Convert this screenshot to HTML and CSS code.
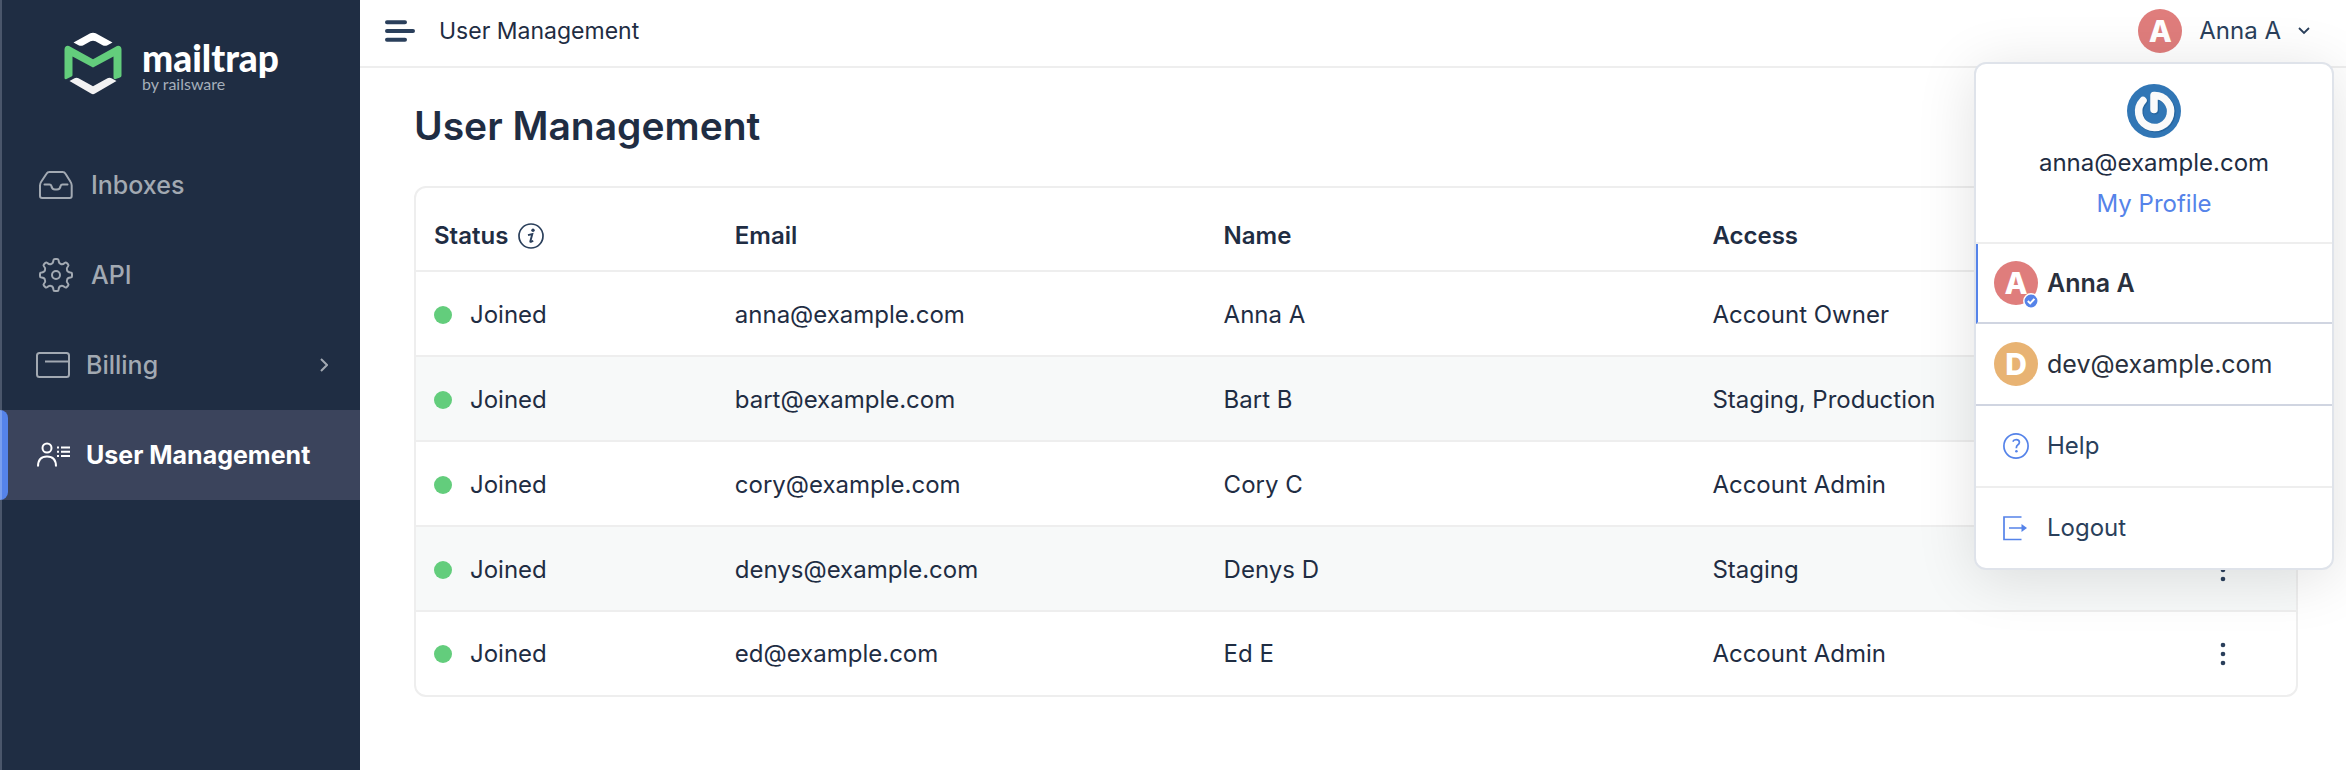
FILE: index.html
```html
<!DOCTYPE html>
<html lang="en">
<head>
<meta charset="utf-8">
<meta name="viewport" content="width=device-width, initial-scale=1">
<title>User Management</title>
<link rel="stylesheet" href="styles.css">
</head>
<body>
<div class="app">
  <aside class="sidebar">
    <a class="logo" href="#">
      <svg class="logo-mark" viewBox="0 0 58 64" width="58" height="64" aria-hidden="true">
        <path d="M9.5 10.5 26.3 1.3Q29 0 31.700 1.300L48.500 10.500 43.500 13.300Q41 14.400 38.600 13.300L31.500 9.300Q29 8 26.500 9.300L19.400 13.300Q17 14.400 14.500 13.300Z" fill="#fff"/>
        <path d="M0.500 17.500Q0.800 13.200 5 14L29 27.200 53 14Q57.200 13.200 57.500 17.500V43.500Q57.500 45 56 45.500L51 47.200Q49.500 47.200 49.500 45.500V24.500L29 35.500 8.500 24.500V43Q8.500 44 7.500 44.500L2 47.200Q0.500 47.200 0.500 46Z" fill="#63cd7c"/>
        <path d="M5.500 49 10.500 46.300Q12.500 45.200 14.500 46.300L29 54.300 43.500 46.300Q45.500 45.200 47.500 46.300L52.500 49 31 61.600Q29 62.800 27 61.600Z" fill="#f2f2f3"/>
      </svg>
      <span class="logo-text">
        <span class="logo-name">mailtrap</span>
        <span class="logo-by">by railsware</span>
      </span>
    </a>
    <nav class="nav">
      <a class="nav-item nav-item-wide" href="#">
        <svg viewBox="0 0 34 34" width="34" height="34" fill="none" stroke="currentColor" stroke-width="2" stroke-linejoin="round" stroke-linecap="round" aria-hidden="true"><path d="M10.500 4h13q2 0 3 1.700l5 8q1.200 1.800 1.200 3.800V28q0 2-2 2h-27.500Q1 30 1 28V17.500q0-2 1.200-3.800l5.300-8Q8.500 4 10.500 4Z"/><path d="M5.500 16.500h5q1.500 0 1.800 1.300Q13 21.500 16 21.500h2q3 0 3.700-3.700.3-1.300 1.800-1.300h5"/></svg>
        <span>Inboxes</span>
      </a>
      <a class="nav-item nav-item-wide" href="#">
        <svg viewBox="-17 -17 34 34" width="34" height="34" fill="none" stroke="currentColor" stroke-width="2" aria-hidden="true">
          <circle r="4"/>
          <path id="cog" d="M0-16H1.200Q2.600-16 2.600-14.500 2.800-11.600 4.800-11 6.800-10.200 8.600-12 9.800-13 10.800-12L12-10.800Q13-9.800 12-8.600 10.200-6.800 11-4.800 11.600-2.800 14.500-2.600 16-2.600 16-1.200V0"/>
          <use href="#cog" transform="rotate(90)"/>
          <use href="#cog" transform="rotate(180)"/>
          <use href="#cog" transform="rotate(270)"/>
        </svg>
        <span>API</span>
      </a>
      <a class="nav-item" href="#">
        <svg viewBox="0 0 34 34" width="34" height="34" fill="none" stroke="currentColor" stroke-width="2" aria-hidden="true"><rect x="1" y="5" width="32" height="24" rx="2.500"/><path d="M9 13.500h24"/></svg>
        <span>Billing</span>
        <svg class="nav-more" viewBox="0 0 8 14" width="8" height="14" fill="none" stroke="currentColor" stroke-width="2" aria-hidden="true"><path d="m1 1 6 6-6 6"/></svg>
      </a>
      <a class="nav-item nav-item-active" href="#" aria-current="page">
        <svg viewBox="0 0 34 34" width="34" height="34" fill="none" stroke="currentColor" stroke-width="2" aria-hidden="true"><circle cx="11" cy="10" r="4.500"/><path d="M2 28.500Q2 18.500 11 18.500T20 28.500M25 9.500h9M25 13.700h9M25 18h9M21 9.500h2M21 13.700h2M21 18h2"/></svg>
        <span>User Management</span>
      </a>
    </nav>
  </aside>

  <div class="page">
    <header class="topbar">
      <button class="icon-button" type="button" aria-label="Toggle menu">
        <svg viewBox="0 0 30 22" width="30" height="22" fill="none" stroke="#2a3f5b" stroke-width="4" stroke-linecap="round" aria-hidden="true"><path d="M2 2.300h18M2 11h26M2 19.700h18"/></svg>
      </button>
      <span class="crumb">User Management</span>
      <div class="account">
        <button class="account-toggle" type="button" aria-expanded="true">
          <span class="avatar avatar-red">A</span>
          <span>Anna A</span>
          <svg viewBox="0 0 12 8" width="12" height="8" fill="none" stroke="currentColor" stroke-width="1.800" aria-hidden="true"><path d="m1 1 5 5 5-5"/></svg>
        </button>
        <div class="menu">
          <div class="menu-profile">
            <svg class="gravatar" viewBox="0 0 54 54" width="54" height="54" aria-hidden="true">
              <circle cx="27" cy="27" r="27" fill="#3176b5"/>
              <path d="M16 16.500A16 16 0 1 0 27 11.500V25.500" transform="translate(1 1)" fill="none" stroke="#1c5488" stroke-opacity=".5" stroke-width="8" stroke-linecap="round" stroke-linejoin="round"/>
              <path d="M16 16.500A16 16 0 1 0 27 11.500V25.500" fill="none" stroke="#fafafa" stroke-width="7.500" stroke-linecap="round" stroke-linejoin="round"/>
            </svg>
            <span class="menu-email">anna@example.com</span>
            <a class="menu-link" href="#">My Profile</a>
          </div>
          <a class="menu-item menu-item-current" href="#">
            <span class="avatar avatar-red">A
              <svg class="avatar-check" viewBox="0 0 16 16" width="16" height="16" aria-hidden="true"><circle cx="8" cy="8" r="7.200" fill="#5583e9" stroke="#fff" stroke-width="1.500"/><path d="m4.800 8 2.400 2.400 4.200-4.600" fill="none" stroke="#fff" stroke-width="2"/></svg>
            </span>
            <span>Anna A</span>
          </a>
          <a class="menu-item" href="#">
            <span class="avatar avatar-orange">D</span>
            <span>dev@example.com</span>
          </a>
          <a class="menu-item menu-item-action" href="#">
            <svg viewBox="0 0 26 26" width="26" height="26" fill="none" stroke="#5583e9" stroke-width="1.700" aria-hidden="true"><circle cx="13" cy="13" r="12.100"/><path d="M9.800 8.600Q10.600 6.600 13.200 6.600q3.200 0 3.200 2.700 0 1.600-1.700 2.700-1.400.9-1.400 3.200"/><circle cx="13.400" cy="18.300" r="1.300" fill="#5583e9" stroke="none"/></svg>
            <span>Help</span>
          </a>
          <a class="menu-item menu-item-action" href="#">
            <svg viewBox="0 0 26 26" width="26" height="26" fill="none" stroke="#5583e9" stroke-width="1.700" aria-hidden="true"><path d="M18.500 2H1v22.500h17.500M6 13h13"/><path d="m18.500 9 5.500 4-5.500 4Z" fill="#5583e9" stroke="none"/></svg>
            <span>Logout</span>
          </a>
        </div>
      </div>
    </header>

    <main class="content">
      <h1 class="title">User Management</h1>
      <div class="card">
        <table class="users">
          <thead>
            <tr>
              <th class="col-status" scope="col"><span class="status-head">Status
                <svg viewBox="0 0 26 26" width="26" height="26" aria-hidden="true"><circle cx="13" cy="13" r="12" fill="none" stroke="#2a3f5b" stroke-width="1.700"/><circle cx="15" cy="7.200" r="1.700" fill="#2a3f5b"/><path d="M10 12.200 14.300 11 12.300 18.500Q12.200 19.500 15.200 17.700" fill="none" stroke="#2a3f5b" stroke-width="1.900"/></svg>
              </span></th>
              <th class="col-text" scope="col">Email</th>
              <th class="col-text" scope="col">Name</th>
              <th class="col-text" scope="col">Access</th>
              <td class="col-actions"></td>
            </tr>
          </thead>
          <tbody>
            <tr>
              <td><span class="status">Joined</span></td><td>anna@example.com</td><td>Anna A</td><td>Account Owner</td><td></td>
            </tr>
            <tr>
              <td><span class="status">Joined</span></td><td>bart@example.com</td><td>Bart B</td><td>Staging, Production</td><td></td>
            </tr>
            <tr>
              <td><span class="status">Joined</span></td><td>cory@example.com</td><td>Cory C</td><td>Account Admin</td><td></td>
            </tr>
            <tr>
              <td><span class="status">Joined</span></td><td>denys@example.com</td><td>Denys D</td><td>Staging</td>
              <td><button class="row-menu" type="button" aria-label="Actions for Denys D"><svg viewBox="0 0 6 24" width="6" height="24" fill="currentColor" aria-hidden="true"><circle cx="3" cy="3" r="2.300"/><circle cx="3" cy="12" r="2.300"/><circle cx="3" cy="21" r="2.300"/></svg></button></td>
            </tr>
            <tr>
              <td><span class="status">Joined</span></td><td>ed@example.com</td><td>Ed E</td><td>Account Admin</td>
              <td><button class="row-menu" type="button" aria-label="Actions for Ed E"><svg viewBox="0 0 6 24" width="6" height="24" fill="currentColor" aria-hidden="true"><circle cx="3" cy="3" r="2.300"/><circle cx="3" cy="12" r="2.300"/><circle cx="3" cy="21" r="2.300"/></svg></button></td>
            </tr>
          </tbody>
        </table>
      </div>
    </main>
  </div>
</div>
</body>
</html>
```
FILE: styles.css
```css
* { box-sizing: border-box; }

body {
  margin: 0;
  background: #fff;
  color: #1f2d43;
  font: 400 24px/32px Inter, "Liberation Sans", sans-serif;
}

a { color: inherit; text-decoration: none; }

button {
  border: 0;
  padding: 0;
  background: none;
  color: inherit;
  font: inherit;
  cursor: pointer;
}

svg { display: block; flex: none; }

.app { display: flex; min-height: 100vh; }

/* Sidebar */
.sidebar {
  flex: none;
  width: 360px;
  background: #1f2d43;
  box-shadow: inset 2px 0 #4a566b;
}

.logo {
  display: flex;
  gap: 20px;
  height: 140px;
  padding: 32px 0 0 64px;
  font-family: Lato, sans-serif;
}

.logo-text { display: flex; flex-direction: column; padding-top: 8px; }

.logo-name { color: #fff; font-size: 37px; font-weight: 900; line-height: 36px; }

.logo-by { color: #a5afba; font-size: 16px; line-height: 16px; }

.nav-item {
  display: flex;
  align-items: center;
  gap: 16px;
  height: 90px;
  padding: 0 32px 0 36px;
  color: #a2a9b2;
  font-size: 25px;
  font-weight: 500;
}

.nav-item-wide { gap: 18px; padding-left: 39px; }

.nav-more { margin-left: auto; }

.nav-item-active {
  position: relative;
  background: #3b445c;
  color: #fff;
  font-weight: 700;
}

.nav-item-active::before {
  content: "";
  position: absolute;
  left: 0;
  top: 0;
  bottom: 0;
  width: 8px;
  border-radius: 0 8px 8px 0;
  background: linear-gradient(to right, #7a9fee 2px, #5583e9 2px);
}

/* Top bar */
.page { flex: 1; min-width: 0; }

.topbar {
  display: flex;
  align-items: center;
  height: 68px;
  padding: 0 36px 4px 25px;
  border-bottom: 2px solid #eee;
}

.crumb { margin-left: 24px; font-size: 23px; }

.account { position: relative; margin-left: auto; }

.account-toggle {
  display: flex;
  align-items: center;
  gap: 17px;
  color: #2a3f5b;
}

.avatar {
  position: relative;
  flex: none;
  width: 44px;
  height: 44px;
  border-radius: 50%;
  color: #fff;
  font-size: 30px;
  font-weight: 800;
  line-height: 44px;
  text-align: center;
}

.avatar-red { background: #df7d7c; }

.avatar-orange { background: #e8b373; }

.avatar-check { position: absolute; right: -1px; bottom: -4px; }

/* Account menu */
.menu {
  position: absolute;
  top: 53px;
  right: -24px;
  z-index: 1;
  width: 360px;
  border: 2px solid #dfe3ea;
  border-radius: 12px;
  background: #fff;
  box-shadow: 0 8px 60px rgba(0, 0, 0, 0.12);
}

.menu-profile {
  display: flex;
  flex-direction: column;
  align-items: center;
  gap: 9px;
  padding: 20px 0 22px;
  border-bottom: 2px solid #eee;
}

.menu-link { color: #5583e9; }

.menu-item {
  display: flex;
  align-items: center;
  gap: 9px;
  height: 82px;
  padding-left: 18px;
  border-bottom: 2px solid #d0d5e1;
  color: #29303d;
  font-size: 25px;
}

.menu-item-current {
  height: 80px;
  padding-left: 16px;
  border-left: 2px solid #5583e9;
  font-weight: 600;
}

.menu-item-action {
  gap: 18px;
  padding-left: 27px;
  border-bottom-color: #eee;
  color: #2a3f5b;
  font-size: 24px;
}

.menu-item:last-child { height: 80px; border-bottom: 0; }

/* Users */
.content { padding: 34px 48px 48px 54px; }

.title { margin: 0 0 36px; font-size: 39px; font-weight: 600; line-height: 48px; }

.card {
  overflow: hidden;
  border: 2px solid #eee;
  border-radius: 12px;
}

.users {
  width: 100%;
  table-layout: fixed;
  border-collapse: separate;
  border-spacing: 0;
}

.users th,
.users td {
  height: 85px;
  padding: 2px 0 0 18px;
  border-bottom: 2px solid #eee;
  text-align: left;
}

.users thead th,
.users thead td { height: 84px; padding-top: 13px; border-bottom: 2px solid #eee; font-weight: 600; }

.users tbody tr:last-child td { height: 83px; padding-top: 0; border-bottom: 0; }

.users tbody tr:nth-child(even) td { background: #f7f9f9; }

.users .col-status { width: 16%; }

.col-text { width: 26%; }

.col-actions { width: 6%; }

.status-head { display: flex; align-items: center; gap: 10px; }

.status { display: flex; align-items: center; gap: 18px; }

.status::before {
  content: "";
  width: 18px;
  height: 18px;
  border-radius: 50%;
  background: #63cd7c;
}

.row-menu {
  display: flex;
  align-items: center;
  justify-content: center;
  width: 44px;
  height: 44px;
  color: #2a3f5b;
}
```
